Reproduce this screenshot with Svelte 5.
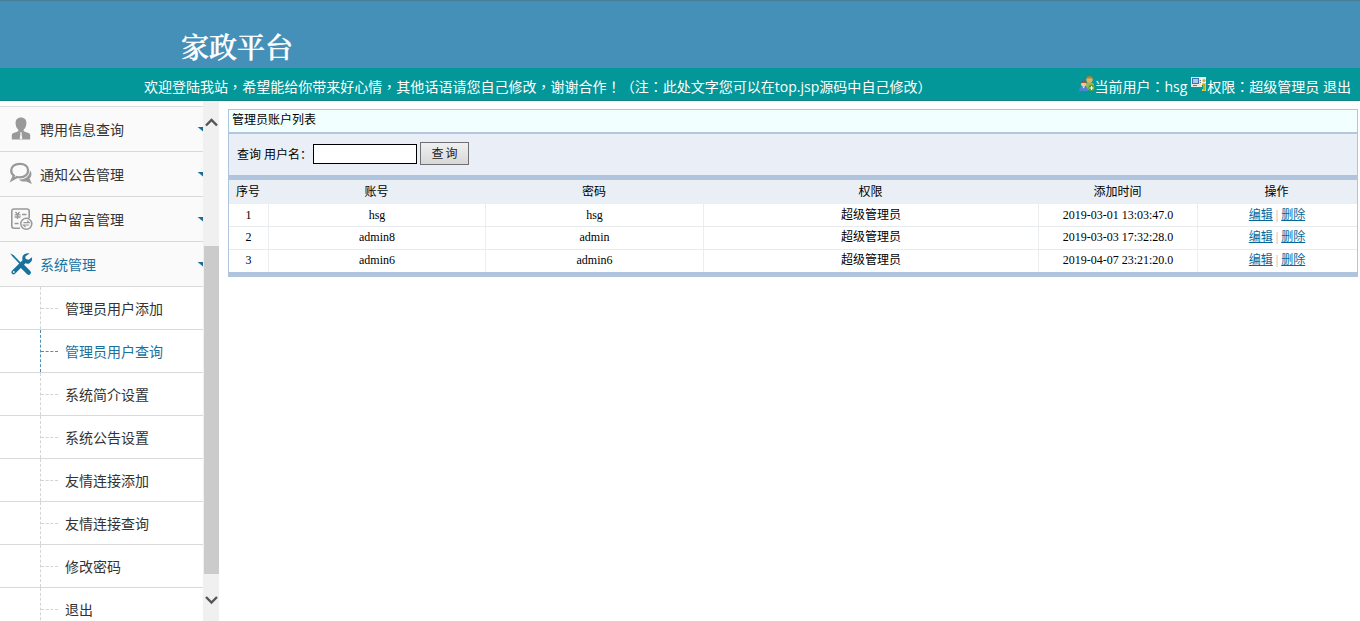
<script lang="ts">
    interface MenuItem {
        icon: 'user' | 'chat' | 'form' | 'tools';
        label: string;
        open?: boolean;
    }

    interface Account {
        name: string;
        password: string;
        role: string;
        added: string;
    }

    const menu: MenuItem[] = [
        { icon: 'user', label: '聘用信息查询' },
        { icon: 'chat', label: '通知公告管理' },
        { icon: 'form', label: '用户留言管理' },
        { icon: 'tools', label: '系统管理', open: true },
    ];

    const subMenu: string[] = [
        '管理员用户添加',
        '管理员用户查询',
        '系统简介设置',
        '系统公告设置',
        '友情连接添加',
        '友情连接查询',
        '修改密码',
        '退出',
    ];

    const accounts: Account[] = [
        { name: 'hsg', password: 'hsg', role: '超级管理员', added: '2019-03-01 13:03:47.0' },
        { name: 'admin8', password: 'admin', role: '超级管理员', added: '2019-03-03 17:32:28.0' },
        { name: 'admin6', password: 'admin6', role: '超级管理员', added: '2019-04-07 23:21:20.0' },
    ];

    const welcome = '欢迎登陆我站，希望能给你带来好心情，其他话语请您自己修改，谢谢合作！（注：此处文字您可以在top.jsp源码中自己修改）';

    let current = $state('管理员用户查询');
    let keyword = $state('');
</script>

<!-- punctuation marks sit in the middle of their cell in the bar -->
{#snippet centred(text: string)}
    {#each text.split(/([，！：])/) as part}{#if /^[，！：]$/.test(part)}<b lang="zh-Hant">{part}</b>{:else}{part}{/if}{/each}
{/snippet}

<div class="page">
    <header class="banner">
        <h1>家政平台</h1>
    </header>

    <div class="welcome">
        <span class="message">{@render centred(welcome)}</span>
        <div class="session">
            <svg width="16" height="16" viewBox="0 0 16 16">
                <path d="M7 8q0-2 3-2t5 2v6H7z" fill="#9cb653" />
                <circle cx="10.5" cy="3.6" r="3.2" fill="#d9b565" />
                <path d="M7.3 3q.5-3 3.2-3t3.2 3q-3-1.4-6.4 0z" fill="#a98238" />
                <path d="M0 15q0-5 4.500-5T9 15z" fill="#4e83d2" />
                <circle cx="4.600" cy="7.800" r="2.700" fill="#eec79c" />
                <path d="M1.600 7.500Q1.800 4.400 4.600 4.400t3 3.100Q5 6 1.600 7.500z" fill="#a34b35" />
                <path d="M3.400 10.400l1.300 2 1.200-2z" fill="#e9f1ff" />
                <circle cx="12.600" cy="12" r="3.200" fill="#4fa13c" />
                <path d="M12.600 10v4M10.600 12h4" stroke="#fff" stroke-width="1.200" />
            </svg>
            <span>{@render centred('当前用户：hsg')}</span>
            <svg class="key" width="16" height="16" viewBox="0 0 16 16">
                <path d="M0 1h11v10H0z" fill="#e8e9df" />
                <path d="M1 2h7v6H1z" fill="#426faf" />
                <path d="M2 3h5v4H2z" fill="#a6c8ef" />
                <path d="M2 9h4v1H2zM8.800 4h1.500v1H8.800zM8.800 6h1.500v1H8.800z" fill="#667b78" />
                <path d="M10 1h5v7h-5z" fill="#f3f3e9" />
                <circle cx="13" cy="4.500" r="1.500" fill="#d0a73a" />
                <path d="M11 7h4v8h-4v-2h1v-4h-1z" fill="#dfcf31" />
                <path d="M13 8v6" stroke="#8f861c" />
            </svg>
            <span>{@render centred('权限：超级管理员 退出')}</span>
        </div>
    </div>

    <div class="body">
        <aside class="sidebar">
            <nav>
                {#each menu as item (item.label)}
                    <a class="item" class:open={item.open} href="#menu">
                        <svg class="icon" width="24" height="24" viewBox="0 0 24 24">
                            {#if item.icon === 'user'}
                                <path
                                    d="M12 .5c-3.600 0-5.400 2.300-5.400 5.500 0 3 1.100 5.300 2.700 6.600v1.600L4 16.200Q2.800 16.800 2.800 18.200v4.300h18.400v-4.300q0-1.400-1.200-2l-5.300-2v-1.600c1.600-1.300 2.700-3.600 2.700-6.600C17.400 2.800 15.600.5 12 .5z"
                                    fill="currentColor"
                                />
                                <path d="M10.800 15.500h2.400l-.7 1.500.8 4.500-1.300 1-1.300-1 .8-4.500z" fill="#fafafa" />
                            {:else if item.icon === 'chat'}
                                <path
                                    d="M10.800 1.800c5 0 8.300 2.800 8.300 6.700s-3.300 6.800-8.300 6.800q-1.400 0-2.700-.3L3 17.800l1.900-4.200Q2.200 11.800 2.200 8.500C2.200 4.600 5.800 1.800 10.800 1.800z"
                                    fill="none"
                                    stroke="currentColor"
                                    stroke-width="2.300"
                                />
                                <path
                                    d="M21 8.500c1.800 1.600 2.200 5.500-.4 7.900l2.300 5.600-5.700-2.600c-2.600.6-5.500 0-7.200-2 5.600.7 10.700-2.800 11-8.900z"
                                    fill="currentColor"
                                />
                            {:else if item.icon === 'form'}
                                <path
                                    d="M11 21.300H5q-2.200 0-2.200-2.200V4.200Q2.800 2 5 2h13q2.200 0 2.200 2.200V11"
                                    fill="none"
                                    stroke="currentColor"
                                    stroke-width="1.600"
                                />
                                <path
                                    d="M6.500 5l2 2.500 2-2.500M5.600 7.800h6M5.600 10h6M8.500 7.500v4.600M13 7.500h4.500M5.600 16.500h4"
                                    fill="none"
                                    stroke="currentColor"
                                    stroke-width="1.300"
                                />
                                <circle cx="17.300" cy="16.800" r="5.500" fill="#fafafa" stroke="currentColor" stroke-width="1.500" />
                                <path
                                    d="M14.500 15.700h5.700l-2-2M20.200 18h-5.700l2 2"
                                    fill="none"
                                    stroke="currentColor"
                                    stroke-width="1.200"
                                />
                            {:else}
                                <path d="M1.200 1.500L4.500 3l9 9.500-1.200 1.200-9-9.500z" fill="currentColor" />
                                <path d="M13.200 14.200l6.500 6.500" stroke="currentColor" stroke-width="4.500" stroke-linecap="round" />
                                <path d="M4.500 20.300l11-11" stroke="currentColor" stroke-width="4.200" stroke-linecap="round" />
                                <path
                                    d="M20.500 1.400c-4.700-1-8.200 2.300-7 6.600l3.500 3.500c3.300.8 6.700-1.700 6-6.300l-3.300 2.600-3-.8-.4-2.600z"
                                    fill="currentColor"
                                />
                                <circle cx="4.800" cy="20" r=".9" fill="#fafafa" />
                            {/if}
                        </svg>
                        <span>{item.label}</span>
                        <i class="caret"></i>
                    </a>
                {/each}
                <ul>
                    {#each subMenu as label (label)}
                        <li class:active={label === current}>
                            <button onclick={() => (current = label)}>{label}</button>
                        </li>
                    {/each}
                </ul>
            </nav>
            <div class="scrollbar">
                <svg width="16" height="16" viewBox="0 0 16 16">
                    <path d="M3 10.500L8.500 5l5.500 5.500" />
                </svg>
                <div class="thumb"></div>
                <svg width="16" height="16" viewBox="0 0 16 16">
                    <path d="M3 5l5.500 5.500L14 5" />
                </svg>
            </div>
        </aside>

        <main>
            <section class="panel">
                <h2>管理员账户列表</h2>
                <div class="search">
                    <label for="keyword">查询 用户名：</label>
                    <input id="keyword" bind:value={keyword} />
                    <button>查询</button>
                </div>
                <table>
                    <colgroup>
                        <col class="no" />
                        <col class="name" />
                        <col class="password" />
                        <col class="role" />
                        <col class="added" />
                        <col />
                    </colgroup>
                    <thead>
                        <tr>
                            <th>序号</th>
                            <th>账号</th>
                            <th>密码</th>
                            <th>权限</th>
                            <th>添加时间</th>
                            <th>操作</th>
                        </tr>
                    </thead>
                    <tbody>
                        {#each accounts as account, index (account.name)}
                            <tr>
                                <td>{index + 1}</td>
                                <td>{account.name}</td>
                                <td>{account.password}</td>
                                <td>{account.role}</td>
                                <td>{account.added}</td>
                                <td class="actions"><a href="#edit">编辑</a><i>|</i><a href="#delete">删除</a></td>
                            </tr>
                        {/each}
                    </tbody>
                </table>
            </section>
        </main>
    </div>
</div>

<style>
    :global(body) {
        background: #fff;
        overflow: hidden;
    }

    .page {
        display: flex;
        flex-direction: column;
        height: 100vh;
        overflow: hidden;
        font-family: 'Open Sans', 'Noto Sans CJK SC', sans-serif;
        font-size: 14px;
    }

    .banner {
        box-sizing: border-box;
        flex: none;
        height: 68px;
        padding: 29px 0 0 181px;
        border-top: 1px solid #497c98;
        background: #4490b9;
    }

    h1 {
        margin: 0;
        font: 500 28px/38px 'Liberation Serif', 'Noto Serif CJK SC', 'Noto Sans CJK SC', serif;
        color: #fff;
        -webkit-text-stroke: 0.5px #fff;
    }

    .welcome {
        display: flex;
        justify-content: space-between;
        box-sizing: border-box;
        flex: none;
        height: 33px;
        padding: 0 9px 0 144px;
        border-bottom: 1px solid #148586;
        background: #049799;
        color: #fff;
        line-height: 36px;
        white-space: nowrap;
    }

    .welcome b {
        font-family: 'Noto Sans CJK TC', sans-serif;
        font-weight: normal;
    }

    .message {
        font-size: 14.03px;
    }

    .session {
        display: flex;
        line-height: 37px;
    }

    .session svg {
        flex: none;
        margin-top: 8px;
    }

    .session .key {
        margin: 8px 0 0 4px;
    }

    .body {
        display: flex;
        flex: 1;
        min-height: 0;
    }

    .sidebar {
        display: flex;
        width: 220px;
        overflow: hidden;
    }

    nav {
        width: 203px;
        margin-top: 5px;
        border-top: 1px solid #ddd;
    }

    .item {
        display: flex;
        align-items: center;
        box-sizing: border-box;
        height: 45px;
        padding-left: 9px;
        border-bottom: 1px solid #d9d9d9;
        background: #fafafa;
        color: #333;
        text-decoration: none;
    }

    .item span {
        margin-left: 7px;
    }

    .icon {
        margin-bottom: 1px;
        color: #999;
    }

    .item.open,
    .item.open .icon {
        color: #19719e;
    }

    .caret {
        width: 6px;
        height: 5px;
        margin-left: auto;
        background: #1b6d96;
        clip-path: polygon(0 0, 100% 0, 100% 100%);
    }

    ul {
        margin: 0;
        padding: 0;
        list-style: none;
    }

    li {
        display: flex;
        align-items: center;
        box-sizing: border-box;
        height: 43px;
        padding-left: 40px;
        border-bottom: 1px solid #d9d9d9;
        color: #333;
    }

    li::before {
        content: '';
        align-self: stretch;
        border-left: 1px dashed #d4d4d4;
    }

    li::after {
        content: '';
        order: 1;
        width: 17px;
        border-top: 1px dashed #d4d4d4;
    }

    li button {
        order: 2;
        padding: 0 0 0 7px;
        border: 0;
        background: none;
        color: inherit;
        font: inherit;
    }

    li.active {
        color: #19719e;
    }

    li.active::before,
    li.active::after {
        border-color: #4e90b1;
    }

    .scrollbar {
        display: flex;
        flex-direction: column;
        box-sizing: border-box;
        width: 16px;
        padding: 14px 0 13px;
        background: #f0f0f0;
    }

    .scrollbar path {
        fill: none;
        stroke: #555;
        stroke-width: 2.4;
    }

    .thumb {
        height: 328px;
        margin: 115px 0 18px 1px;
        background: #cbcbcb;
    }

    main {
        flex: 1;
        padding: 8px 2px 0 8px;
    }

    .panel {
        border: 1px solid #b0c4de;
        border-bottom-width: 5px;
        font: 12px 'Liberation Serif', 'Noto Sans CJK SC', serif;
        color: #000;
    }

    h2 {
        height: 22px;
        margin: 0;
        padding-left: 3px;
        border-bottom: 2px solid #b5c6df;
        background: #f1fffe;
        font: inherit;
        line-height: 21px;
    }

    .search {
        display: flex;
        align-items: center;
        box-sizing: border-box;
        height: 46px;
        padding: 0 0 2px 8px;
        border-bottom: 5px solid #b0c4de;
        background: #eaeff7;
    }

    .search input {
        box-sizing: border-box;
        width: 104px;
        height: 20px;
        margin-left: 1px;
        border: 1px solid #000;
        background: #fff;
    }

    .search button {
        width: 49px;
        height: 23px;
        margin-left: 3px;
        padding: 0 0 2px 2px;
        border: 1px solid #707070;
        background: linear-gradient(#f0f0f0, #d8d8d8);
        color: #222;
        font: inherit;
        letter-spacing: 2px;
    }

    table {
        width: 100%;
        border-collapse: separate;
        border-spacing: 0;
        table-layout: fixed;
    }

    .no {
        width: 40px;
    }

    .name {
        width: 217px;
    }

    .password {
        width: 218px;
    }

    .role {
        width: 335px;
    }

    .added {
        width: 159px;
    }

    th,
    td {
        padding: 0;
        text-align: center;
        font-weight: normal;
        line-height: 20px;
    }

    th {
        height: 24px;
        padding-right: 2px;
        background: #eaeff6;
    }

    td {
        box-sizing: border-box;
        height: 23px;
        border-right: 1px solid #eaeef0;
        border-bottom: 1px solid #e7ebed;
    }

    tr:not(:first-child) td {
        padding-bottom: 2px;
    }

    tr:last-child td {
        height: 22px;
        border-bottom: 0;
    }

    td:last-child {
        padding-right: 1px;
        border-right: 0;
    }

    .actions a {
        color: #05689b;
    }

    .actions i {
        margin: 0 3px;
        color: #aaa;
        font-style: normal;
    }
</style>
